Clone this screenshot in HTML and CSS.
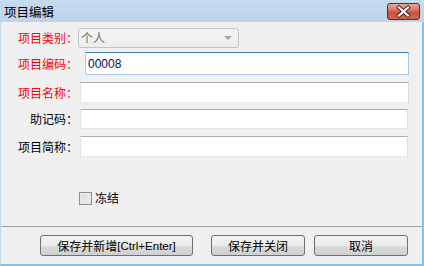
FILE: index.html
```html
<!DOCTYPE html>
<html>
<head>
<meta charset="utf-8">
<link rel="stylesheet" href="styles.css">
</head>
<body>
<div class="window">
  <div class="titlebar">
    <span class="title">项目编辑</span>
    <svg class="close" width="33" height="17" viewBox="0 0 33 17">
      <defs>
        <linearGradient id="cg" x1="0" y1="0" x2="0" y2="1">
          <stop offset="0" stop-color="#eab0a4"/>
          <stop offset="0.45" stop-color="#d66f5c"/>
          <stop offset="0.55" stop-color="#c7513c"/>
          <stop offset="1" stop-color="#cf6a4f"/>
        </linearGradient>
      </defs>
      <rect x="0.5" y="0.5" width="32" height="16" rx="2.5" fill="url(#cg)" stroke="#5a2a2a"/>
      <path d="M12 4.5 L21 12.5 M21 4.5 L12 12.5" stroke="#4a2020" stroke-width="4" stroke-linecap="square"/>
      <path d="M12 4.5 L21 12.5 M21 4.5 L12 12.5" stroke="#ffffff" stroke-width="2.2" stroke-linecap="square"/>
    </svg>
  </div>
  <div class="client">
    <div class="form">
      <div class="row r-type">
        <span class="label req">项目类别：</span>
        <div class="combo">
          <span class="combo-text">个人</span>
          <span class="arrow"></span>
        </div>
      </div>
      <div class="row r-code">
        <span class="label req">项目编码：</span>
        <div class="input focused"><span class="val">00008</span></div>
      </div>
      <div class="row r-name">
        <span class="label req">项目名称：</span>
        <div class="input h21"></div>
      </div>
      <div class="row r-mnem">
        <span class="label">助记码：</span>
        <div class="input h20"></div>
      </div>
      <div class="row r-short">
        <span class="label">项目简称：</span>
        <div class="input h20"></div>
      </div>
      <div class="check-row">
        <span class="checkbox"></span>
        <span class="check-label">冻结</span>
      </div>
    </div>
    <div class="footer">
      <button class="btn b1">保存并新增<span class="latin">[Ctrl+Enter]</span></button>
      <button class="btn b2">保存并关闭</button>
      <button class="btn b3">取消</button>
    </div>
  </div>
</div>
</body>
</html>
```
FILE: styles.css
```css
* { box-sizing: border-box; }
html, body { margin: 0; padding: 0; }
body {
  width: 424px;
  height: 266px;
  overflow: hidden;
  font-family: "Noto Sans CJK SC", "Liberation Sans", sans-serif;
  font-size: 12px;
  background: #f0f0f0;
}
.window {
  width: 424px;
  height: 266px;
  display: flex;
  flex-direction: column;
}
.titlebar {
  height: 22px;
  flex: none;
  display: flex;
  align-items: flex-start;
  justify-content: space-between;
  background: linear-gradient(#c8dbef, #bcd3eb);
  padding-left: 4px;
}
.title {
  font-size: 12.5px;
  line-height: 14px;
  margin-top: 5px;
  color: #000;
}
.close {
  margin-top: 3px;
  margin-right: 4px;
  display: block;
}
.client {
  flex: 1;
  display: flex;
  flex-direction: column;
  background: #f0f0f0;
  border-left: 1px solid #c4d9ee;
  border-right: 2px solid #7fc4ea;
  border-bottom: 2px solid #7fc4ea;
}
.form {
  display: flex;
  flex-direction: column;
  padding-top: 6px;
}
.row {
  display: flex;
  align-items: center;
}
.label {
  width: 77px;
  text-align: right;
  line-height: 14px;
  color: #000;
  white-space: nowrap;
}
.label.req { color: #ff0000; }
.combo {
  width: 161px;
  height: 20px;
  border: 1px solid #c3c3c3;
  border-radius: 3px;
  background: linear-gradient(#f4f4f4, #ededed);
  display: flex;
  align-items: center;
  justify-content: space-between;
  padding: 0 6px 0 2px;
}
.combo-text {
  color: #6d6d6d;
  line-height: 14px;
}
.arrow {
  width: 0;
  height: 0;
  border-left: 4px solid transparent;
  border-right: 4px solid transparent;
  border-top: 4px solid #a7a7a7;
}
.input {
  flex: none;
  background: #ffffff;
  border: 1px solid #e2e3ea;
  border-top-color: #abadb3;
  border-bottom-color: #e3e9ef;
  border-right-color: #dbdfe6;
}
.r-code { margin-top: 4px; }
.r-code .input {
  margin-left: 7px;
  width: 324px;
  height: 23px;
  border-color: #a9cbe8;
  border-top-color: #3d7bad;
  display: flex;
  align-items: center;
  padding-left: 2px;
}
.val {
  font-family: "Liberation Sans", sans-serif;
  font-size: 12px;
  color: #0a0a50;
  line-height: 14px;
}
.r-name { margin-top: 7px; }
.r-name .input { margin-left: 2px; width: 329px; height: 21px; }
.r-mnem { margin-top: 6px; }
.r-mnem .input { margin-left: 2px; width: 328px; height: 20px; }
.r-short { margin-top: 7px; }
.r-short .input { margin-left: 2px; width: 328px; height: 21px; }
.check-row {
  display: flex;
  align-items: center;
  margin-top: 34px;
  padding-left: 78px;
}
.checkbox {
  width: 13px;
  height: 13px;
  border: 1px solid #8e8f8f;
  background: linear-gradient(135deg, #d4d4d4, #f6f6f6);
  box-shadow: inset 0 0 0 2px #e8e8e8;
}
.check-label {
  margin-left: 3px;
  line-height: 14px;
}
.footer {
  margin-top: auto;
  height: 38px;
  border-top: 1px solid #a0a0a0;
  display: flex;
  align-items: flex-start;
  padding-top: 8px;
  padding-left: 39px;
}
.btn {
  height: 21px;
  border: 1px solid #707070;
  border-radius: 3px;
  background: linear-gradient(#f2f2f2 0%, #ebebeb 50%, #dddddd 51%, #cfcfcf 100%);
  font-family: "Noto Sans CJK SC", "Liberation Sans", sans-serif;
  font-size: 12px;
  line-height: 14px;
  color: #000;
  padding: 0;
  display: flex;
  align-items: center;
  justify-content: center;
}
.latin {
  font-family: "Liberation Sans", sans-serif;
  font-size: 11.5px;
}
.b1 { width: 153px; }
.b2 { width: 94px; margin-left: 18px; }
.b3 { width: 94px; margin-left: 9px; }
```
